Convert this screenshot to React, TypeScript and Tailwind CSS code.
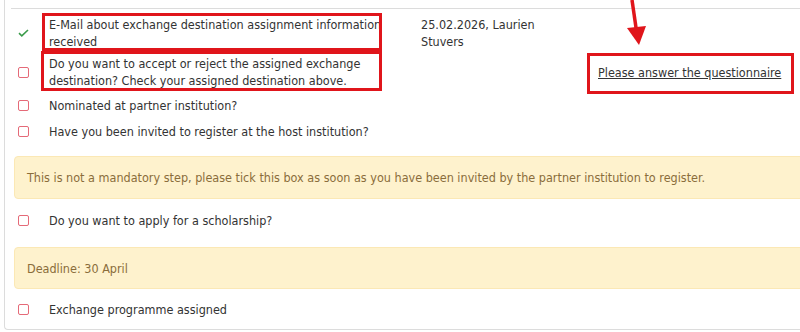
import React from "react";

const Box = () => (
  <span className="block w-[11px] h-[11px] border-[1.5px] border-[#e56a78] rounded-[2px]" />
);

const Check = () => (
  <svg width="11" height="8" viewBox="0 0 11 8" fill="none">
    <path d="M1 4.2 L3.8 6.8 L10 1" stroke="#3a9b4a" strokeWidth="1.6" />
  </svg>
);

const Icon = ({ children }: { children: React.ReactNode }) => (
  <div className="w-[24px] mr-[14px] flex items-center justify-center">{children}</div>
);

export default function App() {
  return (
    <div
      className="relative w-[800px] h-[332px] overflow-hidden bg-white text-[#333] text-[12.5px] leading-[17px]"
      style={{ fontFamily: '"DejaVu Sans Condensed", "DejaVu Sans", Verdana, sans-serif' }}
    >
      <div className="ml-[4px] w-[820px] h-[330px] border-l border-b border-[#dcdcdc] rounded-bl-[4px] pl-[6px] pr-4">
        <div className="h-[9px] border-b border-[#dcdcdc]" />
        {/* Row 1 */}
        <div className="flex pt-[7px] pb-[1px]">
          <Icon><Check /></Icon>
          <div className="w-[372px]">E-Mail about exchange destination assignment information<br />received</div>
          <div className="w-[170px]">25.02.2026, Laurien<br />Stuvers</div>
        </div>
        {/* Row 2 */}
        <div className="flex pt-[4px] pb-[3px]">
          <Icon><Box /></Icon>
          <div className="w-[372px]">Do you want to accept or reject the assigned exchange<br />destination? Check your assigned destination above.</div>
          <div className="w-[177px]" />
          <div className="flex items-center"><span className="underline">Please answer the questionnaire</span></div>
        </div>
        {/* Row 3 */}
        <div className="flex pt-[5px] pb-[4px]">
          <Icon><Box /></Icon>
          <div>Nominated at partner institution?</div>
        </div>
        {/* Row 4 */}
        <div className="flex pt-[5px] pb-[4px]">
          <Icon><Box /></Icon>
          <div>Have you been invited to register at the host institution?</div>
        </div>
        <div className="mt-[12px] ml-[3px] h-[43px] flex items-center px-[12px] bg-[#fef2cd] border border-[#fbe8b5] rounded-[4px] text-[#8a6d3b]">
          This is not a mandatory step, please tick this box as soon as you have been invited by the partner institution to register.
        </div>
        {/* Row 5 */}
        <div className="flex pt-[13px] pb-[4px]">
          <Icon><Box /></Icon>
          <div>Do you want to apply for a scholarship?</div>
        </div>
        <div className="mt-[14px] ml-[3px] h-[42px] flex items-center px-[12px] bg-[#fef2cd] border border-[#fbe8b5] rounded-[4px] text-[#8a6d3b]">
          Deadline: 30 April
        </div>
        {/* Row 6 */}
        <div className="flex pt-[12px]">
          <Icon><Box /></Icon>
          <div>Exchange programme assigned</div>
        </div>
      </div>

      {/* annotations */}
      <div className="absolute left-[42px] top-[13px] w-[340px] h-[38px] border-[3px] border-[#e0151b]" />
      <div className="absolute left-[41px] top-[51px] w-[341px] h-[40px] border-[3px] border-[#e0151b]" />
      <div className="absolute left-[587px] top-[53px] w-[207px] h-[41px] border-[3px] border-[#e0151b]" />
      <svg className="absolute left-[620px] top-0" width="30" height="46" viewBox="0 0 30 46">
        <path d="M12 0 L16.5 31" stroke="#e0151b" strokeWidth="3.5" />
        <path d="M7 28 L26 26 L19 45 Z" fill="#e0151b" />
      </svg>
    </div>
  );
}
